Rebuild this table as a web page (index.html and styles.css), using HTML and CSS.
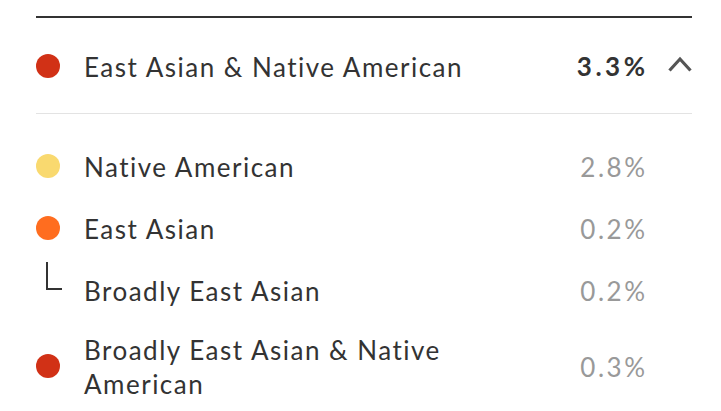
FILE: index.html
```html
<!DOCTYPE html>
<html lang="en">
<head>
<meta charset="utf-8">
<link rel="stylesheet" href="styles.css">
</head>
<body>
<div class="panel">
  <div class="group-head">
    <span class="dot dot-red"></span>
    <span class="name">East Asian &amp; Native American</span>
    <span class="pct pct-bold">3.3%</span>
    <span class="chev">
      <svg width="24" height="16" viewBox="0 0 24 16"><path d="M1.5 14.5 L12 3 L22.5 14.5" fill="none" stroke="#555" stroke-width="3.2"/></svg>
    </span>
  </div>
  <div class="sub-list">
    <div class="row">
      <span class="dot dot-yellow"></span>
      <span class="name">Native American</span>
      <span class="pct">2.8%</span>
      <span class="spacer"></span>
    </div>
    <div class="row">
      <span class="dot dot-orange"></span>
      <span class="name">East Asian</span>
      <span class="pct">0.2%</span>
      <span class="spacer"></span>
    </div>
    <div class="row">
      <span class="elbow"></span>
      <span class="name">Broadly East Asian</span>
      <span class="pct">0.2%</span>
      <span class="spacer"></span>
    </div>
    <div class="row row-last">
      <span class="dot dot-red"></span>
      <span class="name name-wrap">Broadly East Asian &amp; Native American</span>
      <span class="pct">0.3%</span>
      <span class="spacer"></span>
    </div>
  </div>
</div>
</body>
</html>
```

FILE: styles.css
```css
* { box-sizing: border-box; }
html, body { margin: 0; padding: 0; background: #fff; }
body {
  font-family: Lato, "Open Sans", "Liberation Sans", sans-serif;
  color: #333;
  width: 721px;
  height: 411px;
  overflow: hidden;
}
.panel {
  padding: 16px 29px 0 36px;
}
.group-head {
  display: flex;
  align-items: center;
  height: 98px;
  border-top: 2px solid #333;
  border-bottom: 1px solid #e3e3e3;
}
.dot {
  flex: none;
  width: 24px;
  height: 24px;
  border-radius: 50%;
  margin-right: 25px;
}
.dot-red { background: #d13116; }
.dot-yellow { background: #f9d96f; }
.dot-orange { background: #ff6d1f; }
.name {
  flex: 1;
  font-size: 26px;
  line-height: 34px;
  letter-spacing: 1.5px;
  margin-left: -1px;
  padding-top: 2px;
}
.name-wrap { max-width: 450px; flex: 0 1 450px; margin-right: auto; }
.pct {
  flex: none;
  font-size: 26px;
  line-height: 33px;
  padding-top: 2px;
  color: #999;
  text-align: right;
  letter-spacing: 2.5px;
  margin-right: -2.5px;
}
.pct-bold { color: #333; font-weight: 700; letter-spacing: 3.5px; margin-right: -3.5px; }
.chev {
  flex: none;
  width: 24px;
  margin-left: 23px;
  margin-top: -4px;
  display: flex;
  align-items: center;
  height: 16px;
}
.spacer { flex: none; width: 47px; }
.sub-list { padding-top: 21px; }
.row {
  display: flex;
  align-items: center;
  padding: 13.5px 0;
  height: 62px;
}
.row-last { padding-top: 10px; height: auto; }
.elbow {
  flex: none;
  width: 24px;
  height: 26px;
  margin-right: 25px;
  margin-top: -30px;
  padding-left: 10px;
}
.elbow::before {
  content: "";
  display: block;
  width: 14px;
  height: 26px;
  border-left: 2px solid #333;
  border-bottom: 2px solid #333;
}
```
